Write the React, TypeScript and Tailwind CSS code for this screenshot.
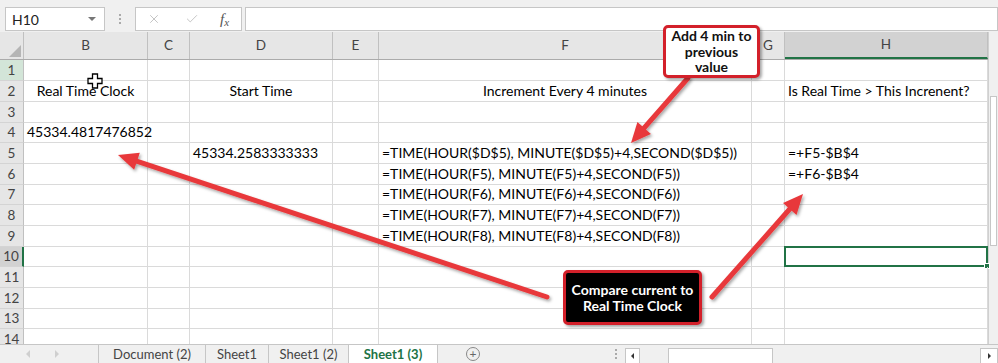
import { X, Check } from "lucide-react";

const cols = [
  { k: "B", w: "w-[124px]" },
  { k: "C", w: "w-[42px]" },
  { k: "D", w: "w-[143px]" },
  { k: "E", w: "w-[46px]" },
  { k: "F", w: "w-[373px]" },
  { k: "G", w: "w-[33px]" },
  { k: "H", w: "w-[203px]" },
];

const rowHeights = [
  "h-[21px]", "h-[21px]", "h-[21px]", "h-[20px]", "h-[21px]", "h-[21px]", "h-[20px]",
  "h-[21px]", "h-[21px]", "h-[20px]", "h-[21px]", "h-[21px]", "h-[20px]", "h-[21px]",
];

const cells: Record<string, { text: string; center?: boolean }> = {
  B2: { text: "Real Time Clock", center: true },
  D2: { text: "Start Time", center: true },
  F2: { text: "Increment Every 4 minutes", center: true },
  H2: { text: "Is Real Time > This Increnent?" },
  B4: { text: "45334.4817476852" },
  D5: { text: "45334.2583333333" },
  F5: { text: "=TIME(HOUR($D$5), MINUTE($D$5)+4,SECOND($D$5))" },
  F6: { text: "=TIME(HOUR(F5), MINUTE(F5)+4,SECOND(F5))" },
  F7: { text: "=TIME(HOUR(F6), MINUTE(F6)+4,SECOND(F6))" },
  F8: { text: "=TIME(HOUR(F7), MINUTE(F7)+4,SECOND(F7))" },
  F9: { text: "=TIME(HOUR(F8), MINUTE(F8)+4,SECOND(F8))" },
  H5: { text: "=+F5-$B$4" },
  H6: { text: "=+F6-$B$4" },
};

function arrow(x1: number, y1: number, x2: number, y2: number) {
  const dx = x2 - x1;
  const dy = y2 - y1;
  const d = Math.hypot(dx, dy);
  const ux = dx / d;
  const uy = dy / d;
  const len = 20;
  const half = 9;
  const bx = x2 - ux * len;
  const by = y2 - uy * len;
  const px = -uy;
  const py = ux;
  return {
    line: { x1, y1, x2: bx + ux * 2, y2: by + uy * 2 },
    head: `${x2},${y2} ${bx + px * half},${by + py * half} ${bx - px * half},${by - py * half}`,
  };
}

const arrows = [
  arrow(688, 78, 631, 143),
  arrow(547, 297, 118, 155),
  arrow(712, 297, 803, 194),
];

function Tab({ label, active, w }: { label: string; active?: boolean; w: string }) {
  return (
    <div
      className={`${w} h-full flex justify-center pt-[1px] border-r border-[#c6c6c6] ${
        active ? "bg-white text-[#217346] font-bold" : "text-[#444]"
      }`}
    >
      <span className="leading-[16px]">{label}</span>
    </div>
  );
}

export default function App() {
  return (
    <div className="relative w-[998px] h-[363px] overflow-hidden bg-white font-[Lato,sans-serif] text-[14px] text-black">
      {/* formula bar */}
      <div className="h-[32px] bg-[#f0f0f0] flex items-start pt-[7px] pl-[5px]">
        <div className="w-[100px] h-[24px] bg-white border border-[#c6c6c6] flex items-center pl-[6px] pr-[8px] justify-between">
          <span className="text-[14px] text-[#222]">H10</span>
          <span className="w-0 h-0 border-l-[4px] border-r-[4px] border-t-[4px] border-l-transparent border-r-transparent border-t-[#777]" />
        </div>
        <div className="w-[30px] h-[24px] flex flex-col items-center justify-center gap-[2px]">
          <span className="w-[2px] h-[2px] bg-[#aaa]" />
          <span className="w-[2px] h-[2px] bg-[#aaa]" />
          <span className="w-[2px] h-[2px] bg-[#aaa]" />
        </div>
        <div className="w-[107px] h-[24px] bg-white border border-[#c6c6c6] flex items-center">
          <X className="w-[14px] h-[14px] text-[#bdbdbd] ml-[11px]" strokeWidth={1.5} />
          <Check className="w-[14px] h-[14px] text-[#bdbdbd] ml-[24px]" strokeWidth={1.5} />
          <span className="ml-[21px] font-[Liberation_Serif,serif] italic text-[15px] text-[#555] leading-none">
            f<span className="text-[11px] relative top-[2px]">x</span>
          </span>
        </div>
        <div className="flex-1 h-[24px] ml-[3px] bg-white border border-[#c6c6c6]" />
      </div>

      {/* sheet */}
      <div className="flex">
        <div className="w-[988px]">
          {/* column headers */}
          <div className="flex h-[28px] bg-[#e6e6e6] border-b border-[#ababab] text-[13.5px]">
            <div className="w-[24px] h-full border-r border-[#c0c0c0] flex items-end justify-end pr-[2px] pb-[2px]">
              <svg width="12" height="12" viewBox="0 0 12 12">
                <polygon points="12,0 12,12 0,12" fill="#b5b5b5" />
              </svg>
            </div>
            {cols.map((c) => (
              <div
                key={c.k}
                className={`${c.w} h-full flex items-center justify-center text-[#444] border-r border-[#c0c0c0] ${
                  c.k === "H" ? "bg-[#d2d2d2] border-b-2 border-b-[#217346]" : ""
                }`}
              >
                {c.k}
              </div>
            ))}
          </div>

          {/* rows */}
          {rowHeights.map((h, i) => {
            const r = i + 1;
            return (
              <div key={r} className={`flex ${h}`}>
                <div
                  className={`w-[24px] h-full flex items-end justify-center pb-[1px] leading-[18px] text-[13.5px] text-[#444] border-b border-[#d4d4d4] ${
                    r === 1
                      ? "bg-[#d3e5d8] border-r border-r-[#c0c0c0]"
                      : r === 10
                      ? "bg-[#d2d2d2] border-r-2 border-r-[#217346]"
                      : "bg-[#e6e6e6] border-r border-r-[#c0c0c0]"
                  }`}
                >
                  {r}
                </div>
                {cols.map((c) => {
                  const cell = cells[`${c.k}${r}`];
                  return (
                    <div
                      key={c.k}
                      className={`${c.w} h-full relative flex items-end pb-[1px] px-[3px] whitespace-nowrap leading-[18px] border-r border-b border-[#dadada] ${
                        cell?.center ? "justify-center" : ""
                      }`}
                    >
                      {cell && <span className="relative z-10">{cell.text}</span>}
                      {c.k === "H" && r === 10 && (
                        <div className="absolute -left-[1px] -top-[1px] -right-[1px] -bottom-[1px] border-2 border-[#217346]">
                          <div className="absolute -right-[4px] -bottom-[4px] w-[6px] h-[6px] bg-[#217346] border border-white" />
                        </div>
                      )}
                    </div>
                  );
                })}
              </div>
            );
          })}
        </div>
        <div className="flex-1 bg-[#f0f0f0] border-l border-[#d0d0d0]">
          <div className="mx-[1px] mt-[64px] h-[150px] bg-white border border-[#c6c6c6]" />
        </div>
      </div>

      {/* sheet tabs */}
      <div className="absolute left-0 right-0 top-[344px] h-[19px] bg-[#f0f0f0] border-t border-[#c6c6c6] flex items-stretch text-[13px]">
        <div className="w-[99px] h-full flex items-center border-r border-[#c6c6c6]">
          <span className="ml-[26px] w-0 h-0 border-t-[4px] border-b-[4px] border-r-[4px] border-t-transparent border-b-transparent border-r-[#cfcfcf]" />
          <span className="ml-[25px] w-0 h-0 border-t-[4px] border-b-[4px] border-l-[4px] border-t-transparent border-b-transparent border-l-[#cfcfcf]" />
        </div>
        <Tab label="Document (2)" w="w-[107px]" />
        <Tab label="Sheet1" w="w-[63px]" />
        <Tab label="Sheet1 (2)" w="w-[80px]" />
        <Tab label="Sheet1 (3)" w="w-[89px]" active />
        <div className="w-[70px] h-full flex justify-center pt-[2px]">
          <span className="w-[14px] h-[14px] rounded-full border border-[#888] flex items-center justify-center text-[12px] leading-none text-[#666]">
            +
          </span>
        </div>
        <div className="flex-1" />
        <div className="w-[14px] flex flex-col items-center justify-center gap-[2px]">
          <span className="w-[2px] h-[2px] bg-[#aaa]" />
          <span className="w-[2px] h-[2px] bg-[#aaa]" />
          <span className="w-[2px] h-[2px] bg-[#aaa]" />
        </div>
        <div className="w-[15px] ml-[2px] mt-[3px] h-[16px] bg-white border border-[#c6c6c6] flex items-center justify-center">
          <span className="w-0 h-0 border-t-[3px] border-b-[3px] border-r-[3px] border-t-transparent border-b-transparent border-r-[#333]" />
        </div>
        <div className="w-[340px] relative">
          <div className="absolute left-[28px] top-[3px] w-[105px] h-[17px] bg-white border border-[#c6c6c6]" />
        </div>
        <div className="w-[18px] mt-[3px] h-[16px] bg-white border border-[#c6c6c6] flex items-center justify-center">
          <span className="w-0 h-0 border-t-[3px] border-b-[3px] border-l-[3px] border-t-transparent border-b-transparent border-l-[#333]" />
        </div>
      </div>

      {/* annotations */}
      <svg className="absolute inset-0 pointer-events-none z-20" width={998} height={363}>
        <defs>
          <filter id="sh" x="-20%" y="-20%" width="140%" height="140%">
            <feDropShadow dx="1.5" dy="2" stdDeviation="1.5" floodColor="#000" floodOpacity="0.35" />
          </filter>
        </defs>
        {arrows.map((a, i) => (
          <g key={i} filter="url(#sh)">
            <line {...a.line} stroke="#e8393b" strokeWidth={5} strokeLinecap="round" />
            <polygon points={a.head} fill="#e8393b" />
          </g>
        ))}
        <g transform="translate(95 81)">
          <path
            d="M-2.5 -7 H2.5 V-2.5 H7 V2.5 H2.5 V7 H-2.5 V2.5 H-7 V-2.5 H-2.5 Z"
            fill="#fff"
            stroke="#000"
            strokeWidth={1.3}
          />
        </g>
      </svg>

      <div className="absolute left-[663px] top-[25px] w-[97px] h-[53px] z-30 bg-white border-[3px] border-[#d3202a] rounded-[5px] shadow-[2px_2px_3px_rgba(0,0,0,0.35)] flex items-center justify-center text-center font-bold text-[14px] leading-[15.5px] text-[#111]">
        Add 4 min to
        <br />
        previous
        <br />
        value
      </div>

      <div className="absolute left-[563px] top-[270px] w-[139px] h-[55px] z-30 bg-black border-[3px] border-[#d3202a] rounded-[5px] shadow-[2px_2px_3px_rgba(0,0,0,0.35)] flex items-center justify-center text-center font-bold text-[14px] leading-[16px] text-white">
        Compare current to
        <br />
        Real Time Clock
      </div>
    </div>
  );
}
